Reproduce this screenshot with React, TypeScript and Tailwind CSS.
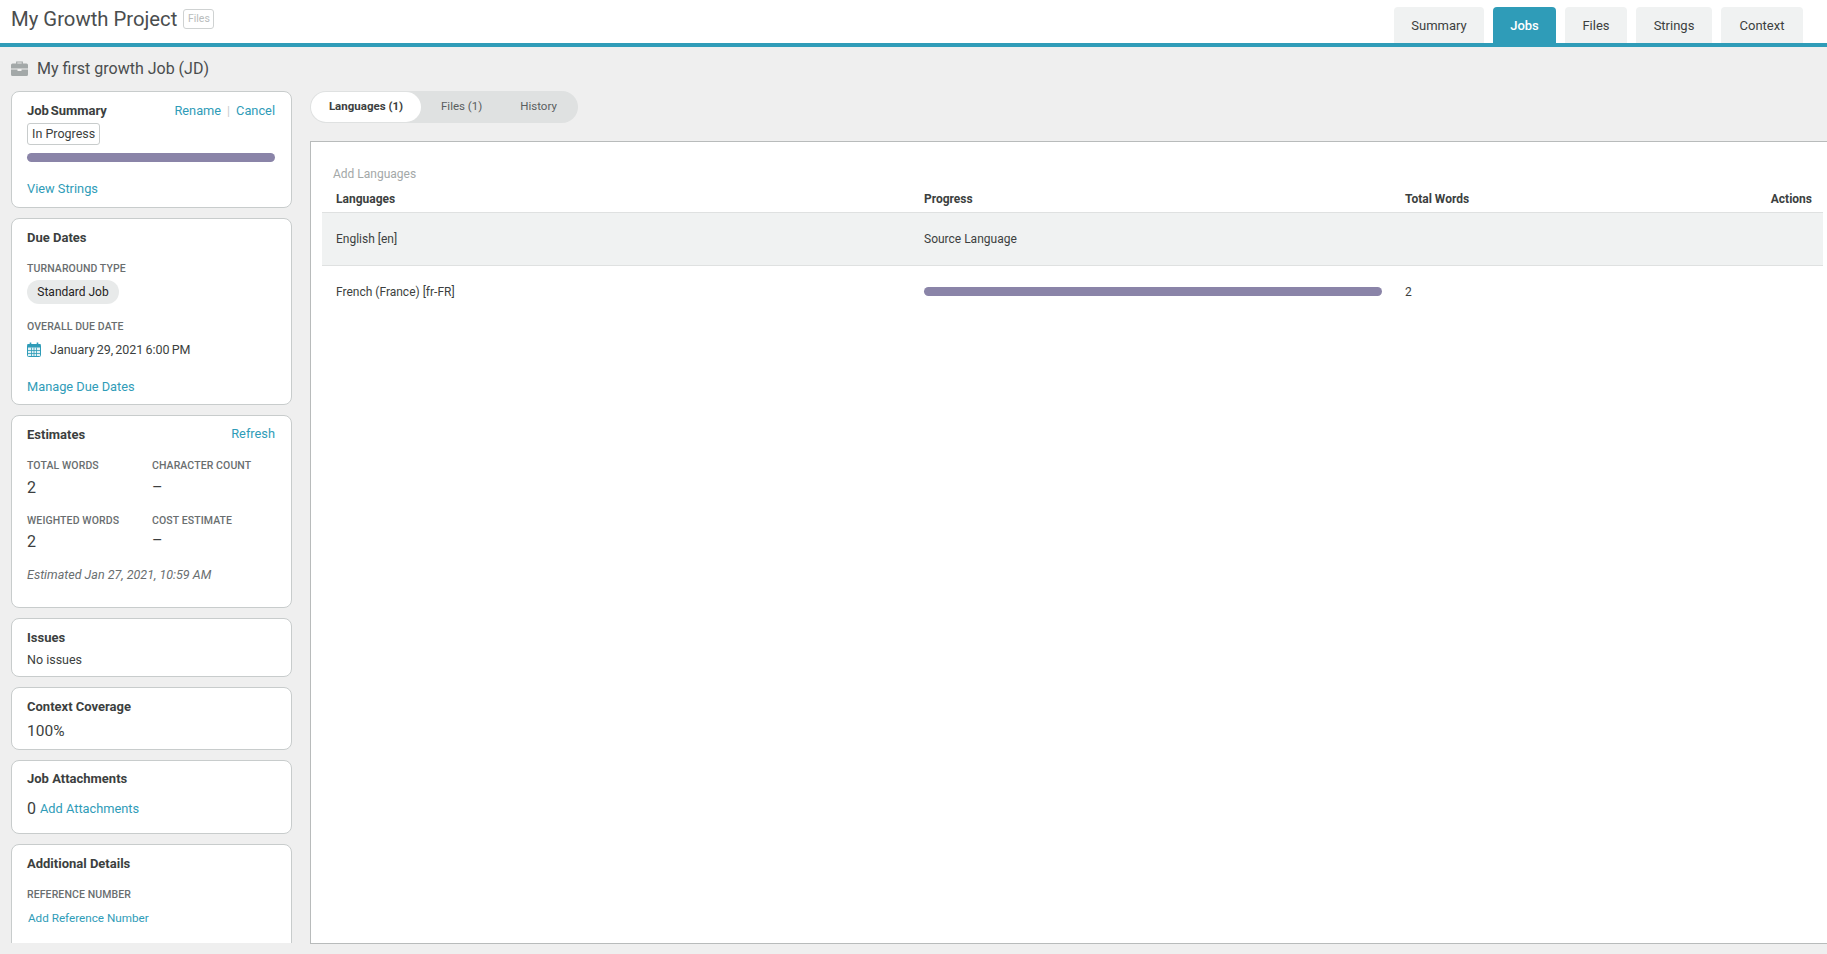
import React from "react";

const tabs = [
  { name: "Summary", width: "w-[90px]" },
  { name: "Jobs", width: "w-[63px]" },
  { name: "Files", width: "w-[62px]" },
  { name: "Strings", width: "w-[76px]" },
  { name: "Context", width: "w-[82px]" },
];

function Label({ children }: { children: React.ReactNode }) {
  return <div className="text-[10.5px] leading-[14px] font-medium text-[#696e6f] tracking-[0.1px]">{children}</div>;
}

function Card({ className, children }: { className: string; children: React.ReactNode }) {
  return <div className={`shrink-0 rounded-[8px] border border-[#c8cccc] bg-white pl-[15px] pr-[16px] ${className}`}>{children}</div>;
}

function Heading({ children }: { children: React.ReactNode }) {
  return <h3 className="text-[13px] leading-[18px] font-bold text-[#3c3f40]">{children}</h3>;
}

function Link({ children, className = "" }: { children: React.ReactNode; className?: string }) {
  return <a className={`text-[12.8px] leading-[18px] text-[#2f9cb8] ${className}`}>{children}</a>;
}

function Briefcase() {
  return (
    <svg width="17" height="15" viewBox="0 0 17 15" className="shrink-0">
      <path d="M5.7 3V1h5.6v2" fill="none" stroke="#a3a8a8" strokeWidth="1.2" />
      <path d="M1.5 2.5h14a1.5 1.5 0 0 1 1.5 1.5v3.6H0V4a1.5 1.5 0 0 1 1.5-1.5z" fill="#a3a8a8" />
      <path d="M0 8.4h6.5v1.6h4V8.4H17v5.1a1.5 1.5 0 0 1-1.5 1.5h-14A1.5 1.5 0 0 1 0 13.5z" fill="#a3a8a8" />
    </svg>
  );
}

function CalendarIcon() {
  return (
    <svg width="14" height="15" viewBox="0 0 14 15" className="shrink-0">
      <rect x="0.5" y="2.5" width="13" height="12" rx="1" fill="#e3f2f6" stroke="#2f9cb8" />
      <rect x="0.5" y="2" width="13" height="3.5" fill="#2f9cb8" />
      <path d="M3.5 0.5v3M10.5 0.5v3" stroke="#2f9cb8" strokeWidth="1.6" />
      <path d="M0.5 8.5h13M0.5 11.5h13M4.5 5.5v9M7 5.5v9M9.5 5.5v9" stroke="#2f9cb8" strokeWidth="0.8" />
    </svg>
  );
}

export default function App() {
  return (
    <div className="h-[954px] w-[1827px] overflow-hidden bg-[#efefef] font-['Roboto',sans-serif] text-[#3c3f40]">
      <header className="flex h-[47px] items-end justify-between border-b-4 border-[#2f9cb8] bg-white pl-[11px] pr-[24px]">
        <div className="flex h-[38px] items-center gap-[6px] self-start">
          <h1 className="text-[20.3px] font-normal text-[#4a4d4e]">My Growth Project</h1>
          <span className="flex h-[20px] w-[31px] items-center justify-center rounded-[3px] border border-[#cfd2d2] text-[10.5px] text-[#b8bcbc]">Files</span>
        </div>
        <nav className="flex gap-[9px]">
          {tabs.map((t) => (
            <div
              key={t.name}
              className={`flex h-[36px] items-center justify-center rounded-t-[4px] pt-px text-[13px] ${t.width} ${
                t.name === "Jobs" ? "bg-[#2f9cb8] font-medium text-white" : "bg-[#f0f2f2] text-[#3c3f40]"
              }`}
            >
              {t.name}
            </div>
          ))}
        </nav>
      </header>

      <div className="flex h-[44px] items-center gap-[9px] pb-[1px] pl-[11px]">
        <Briefcase />
        <h2 className="text-[16px] font-normal text-[#4a4d4e]">My first growth Job (JD)</h2>
      </div>

      <div className="flex h-[852px] items-start">
        <aside className="ml-[11px] flex h-[852px] w-[281px] shrink-0 flex-col gap-[10px] overflow-hidden">
          <Card className="h-[116.5px] pt-[10px]">
            <div className="flex items-center justify-between">
              <Heading><span className="[word-spacing:-1.5px]">Job Summary</span></Heading>
              <div className="flex items-center">
                <Link>Rename</Link>
                <span className="mx-[6px] text-[12px] leading-[18px] text-[#c8cccc]">|</span>
                <Link>Cancel</Link>
              </div>
            </div>
            <div className="mt-[3px] flex h-[22px] w-fit items-center rounded-[3px] border border-[#c8cccc] px-[4px] text-[12.5px]">In Progress</div>
            <div className="mt-[8px] h-[9px] rounded-full bg-[#8a84a8]" />
            <Link className="mt-[18px] block">View Strings</Link>
          </Card>

          <Card className="h-[187.5px] pt-[10px]">
            <Heading>Due Dates</Heading>
            <div className="mt-[15px]"><Label>TURNAROUND TYPE</Label></div>
            <div className="mt-[4px] flex h-[24px] w-[92px] items-center justify-center rounded-full bg-[#e8eaea] text-[12px] text-[#1f2122]">Standard Job</div>
            <div className="mt-[16px]"><Label>OVERALL DUE DATE</Label></div>
            <div className="mt-[7px] flex items-center gap-[9px] text-[12.5px] leading-[18px]">
              <CalendarIcon />
              <span className="[word-spacing:-1px]">January 29, 2021 6:00 PM</span>
            </div>
            <Link className="mt-[19px] block">Manage Due Dates</Link>
          </Card>

          <Card className="h-[193px] pt-[10px]">
            <div className="flex items-center justify-between">
              <Heading>Estimates</Heading>
              <Link className="-translate-y-px">Refresh</Link>
            </div>
            <div className="mt-[15px] grid grid-cols-[125px_1fr] gap-y-[15px]">
              <div><Label>TOTAL WORDS</Label><div className="mt-[4px] text-[16px] leading-[22px]">2</div></div>
              <div><Label>CHARACTER COUNT</Label><div className="mt-[4px] text-[16px] leading-[22px]">–</div></div>
              <div><Label>WEIGHTED WORDS</Label><div className="mt-[3px] text-[16px] leading-[22px]">2</div></div>
              <div><Label>COST ESTIMATE</Label><div className="mt-[2px] text-[16px] leading-[22px]">–</div></div>
            </div>
            <div className="mt-[13px] text-[12.5px] italic leading-[18px] text-[#696e6f]">Estimated Jan 27, 2021, 10:59 AM</div>
          </Card>

          <Card className="h-[59px] pt-[10px]">
            <Heading>Issues</Heading>
            <div className="mt-[4px] text-[12.5px] leading-[18px]">No issues</div>
          </Card>

          <Card className="h-[63px] pt-[10px]">
            <Heading>Context Coverage</Heading>
            <div className="mt-[3px] text-[15.5px] leading-[24px]">100%</div>
          </Card>

          <Card className="h-[74px] pt-[9px]">
            <Heading>Job Attachments</Heading>
            <div className="mt-[10px] flex items-center gap-[4px]">
              <span className="text-[16px] leading-[22px]">0</span>
              <Link>Add Attachments</Link>
            </div>
          </Card>

          <Card className="h-[120px] pt-[10px]">
            <Heading>Additional Details</Heading>
            <div className="mt-[15px]"><Label>REFERENCE NUMBER</Label></div>
            <a className="mt-[7px] ml-px block text-[11.7px] leading-[18px] text-[#2f9cb8]">Add Reference Number</a>
          </Card>
        </aside>

        <main className="ml-[18px] flex-1">
          <div className="flex h-[32px] w-[268px] items-center rounded-full bg-[#dfe1e1] text-[11.5px] text-[#5a5e5f]">
            <div className="ml-px flex h-[30px] w-[110px] items-center justify-center rounded-full bg-white font-bold text-[#3c3f40]">Languages (1)</div>
            <div className="ml-[20px]">Files (1)</div>
            <div className="ml-[38px]">History</div>
          </div>
          <section className="mt-[18px] h-[803px] border-t border-b border-l border-[#b8bbbb] bg-white pl-[11px] pt-[23px]">
            <div className="pl-[11px] text-[12px] leading-[19px] text-[#a3a8a8]">Add Languages</div>
            <div className="w-[1501px] text-[12px] text-[#3c3f40]">
              <div className="grid h-[29px] grid-cols-[588px_481px_1fr] items-center border-b border-[#dfe1e1] pl-[14px] pr-[11px] pt-[1px] font-bold">
                <div>Languages</div>
                <div>Progress</div>
                <div className="flex justify-between"><span>Total Words</span><span>Actions</span></div>
              </div>
              <div className="grid h-[53px] grid-cols-[588px_481px_1fr] items-center border-b border-[#dfe1e1] bg-[#f0f2f2] pl-[14px] pr-[11px]">
                <div>English [en]</div>
                <div>Source Language</div>
                <div />
              </div>
              <div className="grid h-[52px] grid-cols-[588px_481px_1fr] items-center pl-[14px] pr-[11px]">
                <div>French (France) [fr-FR]</div>
                <div><div className="h-[9px] w-[458px] -translate-y-px rounded-full bg-[#8a84a8]" /></div>
                <div>2</div>
              </div>
            </div>
          </section>
        </main>
      </div>
    </div>
  );
}
